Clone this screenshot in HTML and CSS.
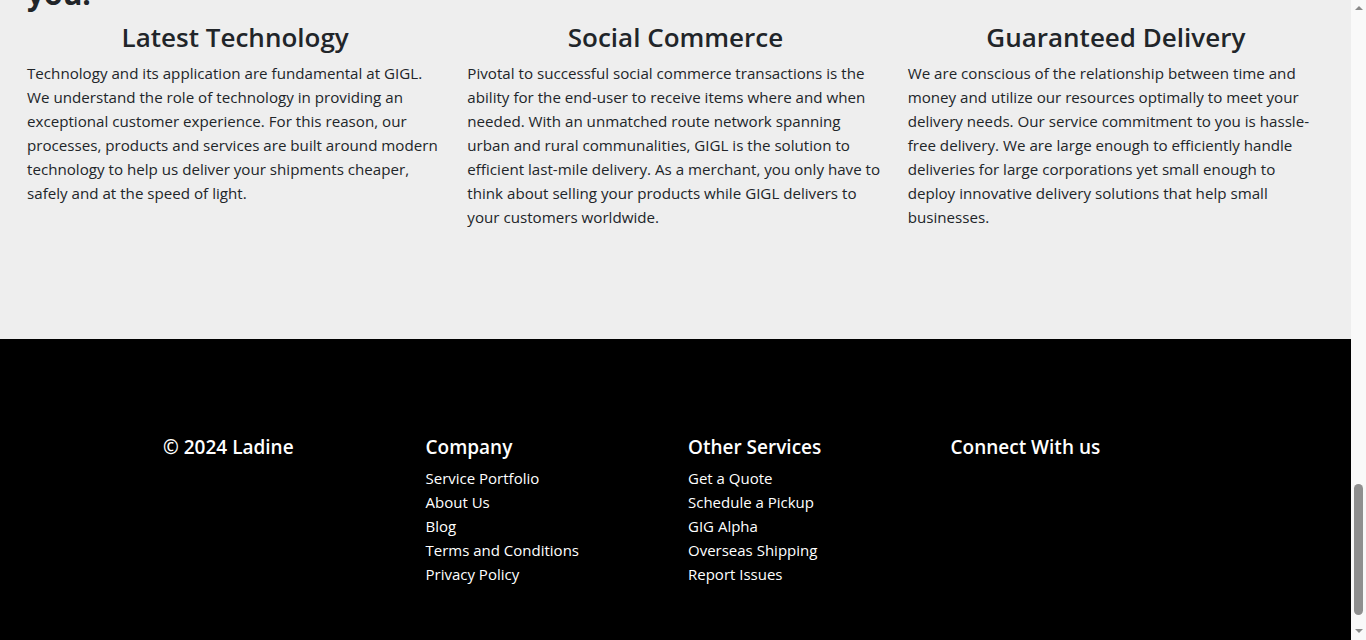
FILE: index.html
```html
<!DOCTYPE html>
<html lang="en">
<head>
<meta charset="utf-8">
<title>GIGL</title>
<link rel="stylesheet" href="styles.css">
</head>
<body>
<div class="viewport">
  <section class="why">
    <h2 class="why-title">you.</h2>
    <div class="features">
      <div class="feature">
        <h3>Latest Technology</h3>
        <p>Technology and its application are fundamental at GIGL. We understand the role of technology in providing an exceptional customer experience. For this reason, our processes, products and services are built around modern technology to help us deliver your shipments cheaper, safely and at the speed of light.</p>
      </div>
      <div class="feature">
        <h3>Social Commerce</h3>
        <p>Pivotal to successful social commerce transactions is the ability for the end-user to receive items where and when needed. With an unmatched route network spanning urban and rural communalities, GIGL is the solution to efficient last-mile delivery. As a merchant, you only have to think about selling your products while GIGL delivers to your customers worldwide.</p>
      </div>
      <div class="feature">
        <h3>Guaranteed Delivery</h3>
        <p>We are conscious of the relationship between time and money and utilize our resources optimally to meet your delivery needs. Our service commitment to you is hassle-free delivery. We are large enough to efficiently handle deliveries for large corporations yet small enough to deploy innovative delivery solutions that help small businesses.</p>
      </div>
    </div>
  </section>
  <footer class="footer">
    <div class="footer-inner">
      <div class="footer-col">
        <h4>© 2024 Ladine</h4>
      </div>
      <div class="footer-col">
        <h4>Company</h4>
        <ul>
          <li><a href="#">Service Portfolio</a></li>
          <li><a href="#">About Us</a></li>
          <li><a href="#">Blog</a></li>
          <li><a href="#">Terms and Conditions</a></li>
          <li><a href="#">Privacy Policy</a></li>
        </ul>
      </div>
      <div class="footer-col">
        <h4>Other Services</h4>
        <ul>
          <li><a href="#">Get a Quote</a></li>
          <li><a href="#">Schedule a Pickup</a></li>
          <li><a href="#">GIG Alpha</a></li>
          <li><a href="#">Overseas Shipping</a></li>
          <li><a href="#">Report Issues</a></li>
        </ul>
      </div>
      <div class="footer-col">
        <h4>Connect With us</h4>
      </div>
    </div>
  </footer>
</div>
<div class="scrollbar" aria-hidden="true">
  <span class="sb-arrow sb-up"></span>
  <span class="sb-track">
    <span class="sb-thumb"></span>
  </span>
  <span class="sb-arrow sb-down"></span>
</div>
</body>
</html>
```
FILE: styles.css
```css
html, body {
  margin: 0;
  padding: 0;
}
body {
  display: flex;
  height: 100vh;
  overflow: hidden;
  background: #eeeeee;
  font-family: "Open Sans", "Noto Sans", sans-serif;
  color: #212529;
}
.viewport {
  flex: 1;
  min-width: 0;
  display: flex;
  flex-direction: column;
  justify-content: flex-end;
  overflow: hidden;
}
.why {
  flex-shrink: 0;
  padding: 0 27px 110px;
}
.why-title {
  margin: 0;
  font-size: 30px;
  font-weight: 700;
  line-height: 36px;
}
.features {
  display: grid;
  grid-template-columns: repeat(3, 1fr);
  column-gap: 24px;
  margin-top: 10px;
}
.feature h3 {
  margin: 0 0 8px;
  font-size: 26px;
  font-weight: 600;
  line-height: 31px;
  text-align: center;
}
.feature p {
  margin: 0;
  font-size: 15.15px;
  line-height: 24px;
}
.footer {
  flex-shrink: 0;
  background: #000;
  color: #fff;
  height: 301px;
  box-sizing: border-box;
  padding-top: 97px;
}
.footer-inner {
  width: 1050px;
  margin: 0 auto;
  display: grid;
  grid-template-columns: repeat(4, 1fr);
}
.footer-col {
  padding: 0 12.5px;
}
.footer-col h4 {
  margin: 0 0 7px;
  font-size: 19px;
  font-weight: 600;
  line-height: 23px;
}
.footer-col ul {
  list-style: none;
  margin: 0;
  padding: 0;
}
.footer-col li {
  font-size: 15px;
  line-height: 24px;
}
.footer-col a {
  color: #fff;
  text-decoration: none;
}
.scrollbar {
  width: 15px;
  flex-shrink: 0;
  background: #f9f9f9;
  display: flex;
  flex-direction: column;
  align-items: center;
  padding: 6px 0 7px;
  box-sizing: border-box;
}
.sb-arrow {
  width: 0;
  height: 0;
  border-left: 4.5px solid transparent;
  border-right: 4.5px solid transparent;
}
.sb-up {
  border-bottom: 4.5px solid #8a8a8a;
}
.sb-down {
  border-top: 4.5px solid #8a8a8a;
}
.sb-track {
  flex: 1;
  display: flex;
  flex-direction: column;
  justify-content: flex-end;
  padding-bottom: 14px;
}
.sb-thumb {
  width: 9px;
  height: 131px;
  border-radius: 4.5px;
  background: #8f8f8f;
}
```
